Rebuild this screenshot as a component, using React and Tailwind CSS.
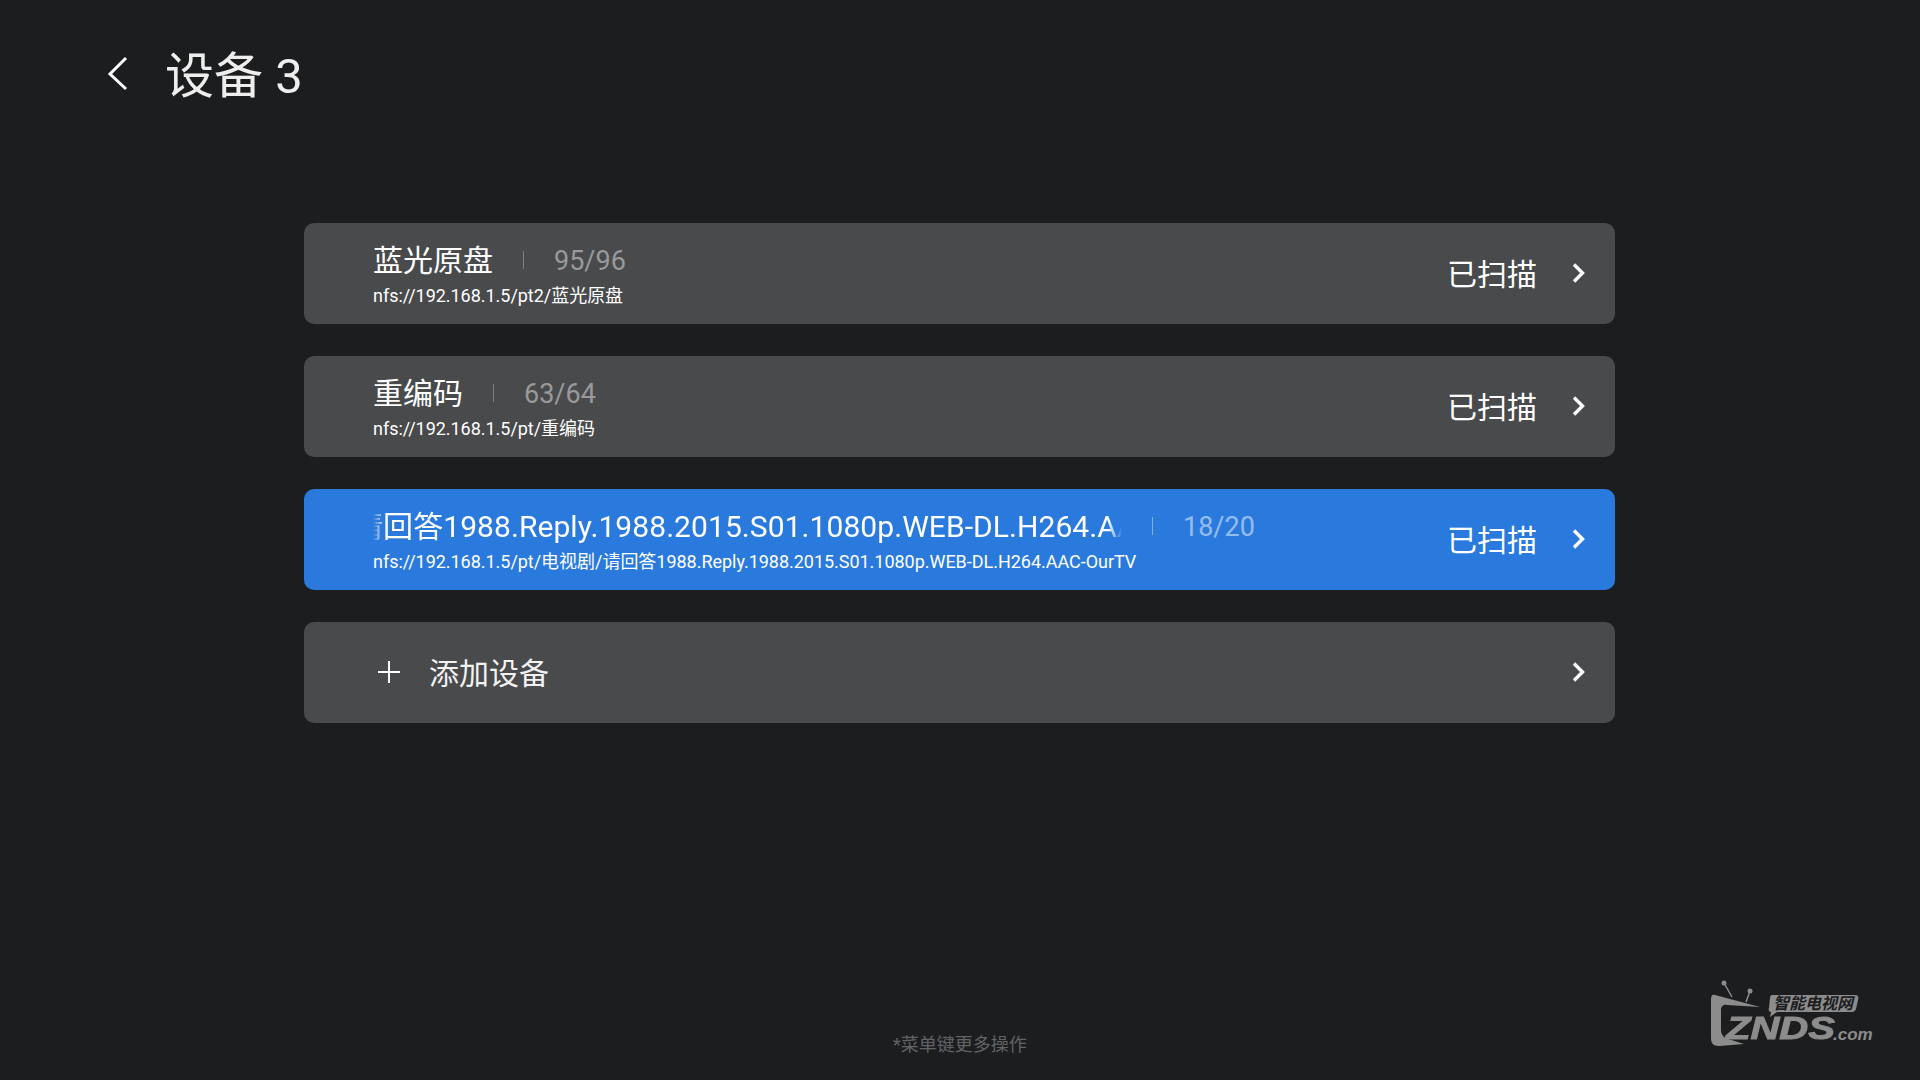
import React from 'react';

const Chevron = () => (
  <svg width="14" height="22" viewBox="0 0 14 22" fill="none" className="shrink-0 mt-[-2px]">
    <path d="M3 2.5l8.5 8.5-8.5 8.5" stroke="white" strokeWidth="3.4" />
  </svg>
);

const Logo = () => (
  <div className="absolute left-[1710px] top-[980px] w-[164px] h-[68px] text-[#8c8c8c]">
    <svg width="164" height="68" viewBox="0 0 164 68" fill="none" className="absolute left-0 top-0">
      <path d="M14 3L22 17M40 11L36 22" stroke="#8c8c8c" strokeWidth="1.5" />
      <circle cx="14" cy="3" r="2.5" fill="#8c8c8c" />
      <circle cx="40" cy="11" r="2.5" fill="#8c8c8c" />
      <path d="M5 15L50 27L17 25C13 24 11 27 11 30V50C11 54 13 56 15 58L34 64L9 66C3 66 1 63 1 58V20C1 16 2 14 5 15Z" fill="#8c8c8c" />
      <path d="M62 15H145C148 15 149 17 148 20L146 29C145 31 144 32 142 32H67L60 37L61 32C59 32 58 30 59 28L60 18C60 16 61 15 62 15Z" fill="#8c8c8c" />
    </svg>
    <span className="absolute left-[63px] top-[14px] text-[16px] leading-[19px] font-bold italic text-[#1c1d1f] whitespace-nowrap">智能电视网</span>
    <span className="absolute left-[16px] top-[32px] origin-left scale-x-[1.25] text-[32px] leading-[32px] font-bold italic font-['Liberation_Sans',sans-serif] [-webkit-text-stroke:1px_#8c8c8c] whitespace-nowrap">ZNDS</span>
    <span className="absolute left-[123px] top-[45px] text-[17px] leading-[20px] font-bold italic font-['Liberation_Sans',sans-serif] whitespace-nowrap">.com</span>
  </div>
);

const DeviceRow = ({ name, count, path, active, nameWidth, clipped }) => (
  <div className={`h-[101px] rounded-[10px] flex items-center pl-[69px] pr-[30px] ${active ? 'bg-[#2a7ade]' : 'bg-[#494a4c]'}`}>
    <div className="flex-1 min-w-0 pt-[2px]">
      <div className="flex items-center h-[40px]">
        {clipped ? (
          <div className="overflow-hidden whitespace-nowrap text-white text-[30px] leading-[40px] tracking-[0.07px] [mask-image:linear-gradient(to_right,transparent,black_12px,black_735px,transparent)]" style={{ width: nameWidth }}>
            <span className="block ml-[-20px]">{name}</span>
          </div>
        ) : (
          <div className="text-white text-[30px] leading-[40px] whitespace-nowrap">{name}</div>
        )}
        <div className={`w-px h-[18px] mx-[30px] mt-[-3px] ${active ? 'bg-white/40' : 'bg-white/30'}`} />
        <div className={`text-[27px] leading-[40px] ${active ? 'text-white/50' : 'text-white/45'}`}>{count}</div>
      </div>
      <div className="text-white text-[18px] leading-[24px] tracking-[-0.03px] mt-[3px] whitespace-nowrap">{path}</div>
    </div>
    <div className="text-white text-[30px] leading-[40px] mr-[34px] mt-[2px]">已扫描</div>
    <Chevron />
  </div>
);

export default function App() {
  return (
    <div className="relative w-[1920px] h-[1080px] overflow-hidden bg-[#1c1d1f] font-['Roboto','Noto_Sans_CJK_SC',sans-serif]">
      <div className="flex items-center h-[76px] pt-[38px] box-content pl-[106px]">
        <svg width="24" height="36" viewBox="0 0 24 36" fill="none" className="mt-[-6px]">
          <path d="M20 3L4 19l16 15" stroke="white" strokeWidth="3" />
        </svg>
        <h1 className="ml-[35px] mt-[1px] text-[49px] leading-[76px] text-[#eeeeee] font-normal">设备 3</h1>
      </div>

      <div className="flex flex-col gap-[32px] w-[1311px] ml-[304px] mt-[109px]">
        <DeviceRow name="蓝光原盘" count="95/96" path="nfs://192.168.1.5/pt2/蓝光原盘" />
        <DeviceRow name="重编码" count="63/64" path="nfs://192.168.1.5/pt/重编码" />
        <DeviceRow
          active
          clipped
          nameWidth={749}
          name="请回答1988.Reply.1988.2015.S01.1080p.WEB-DL.H264.AAC-OurTV"
          count="18/20"
          path="nfs://192.168.1.5/pt/电视剧/请回答1988.Reply.1988.2015.S01.1080p.WEB-DL.H264.AAC-OurTV"
        />
        <div className="h-[101px] rounded-[10px] bg-[#494a4c] flex items-center pl-[73px] pr-[30px]">
          <svg width="24" height="24" viewBox="0 0 24 24" fill="none" className="shrink-0 mt-[-1px]">
            <path d="M12 1v22M1 12h22" stroke="white" strokeWidth="2" />
          </svg>
          <div className="flex-1 ml-[28px] mt-[2px] text-[#f2f2f2] text-[30px] leading-[40px]">添加设备</div>
          <Chevron />
        </div>
      </div>

      <div className="text-center text-[18px] leading-[24px] text-[#626365] mt-[310px]">*菜单键更多操作</div>

      <Logo />
    </div>
  );
}
